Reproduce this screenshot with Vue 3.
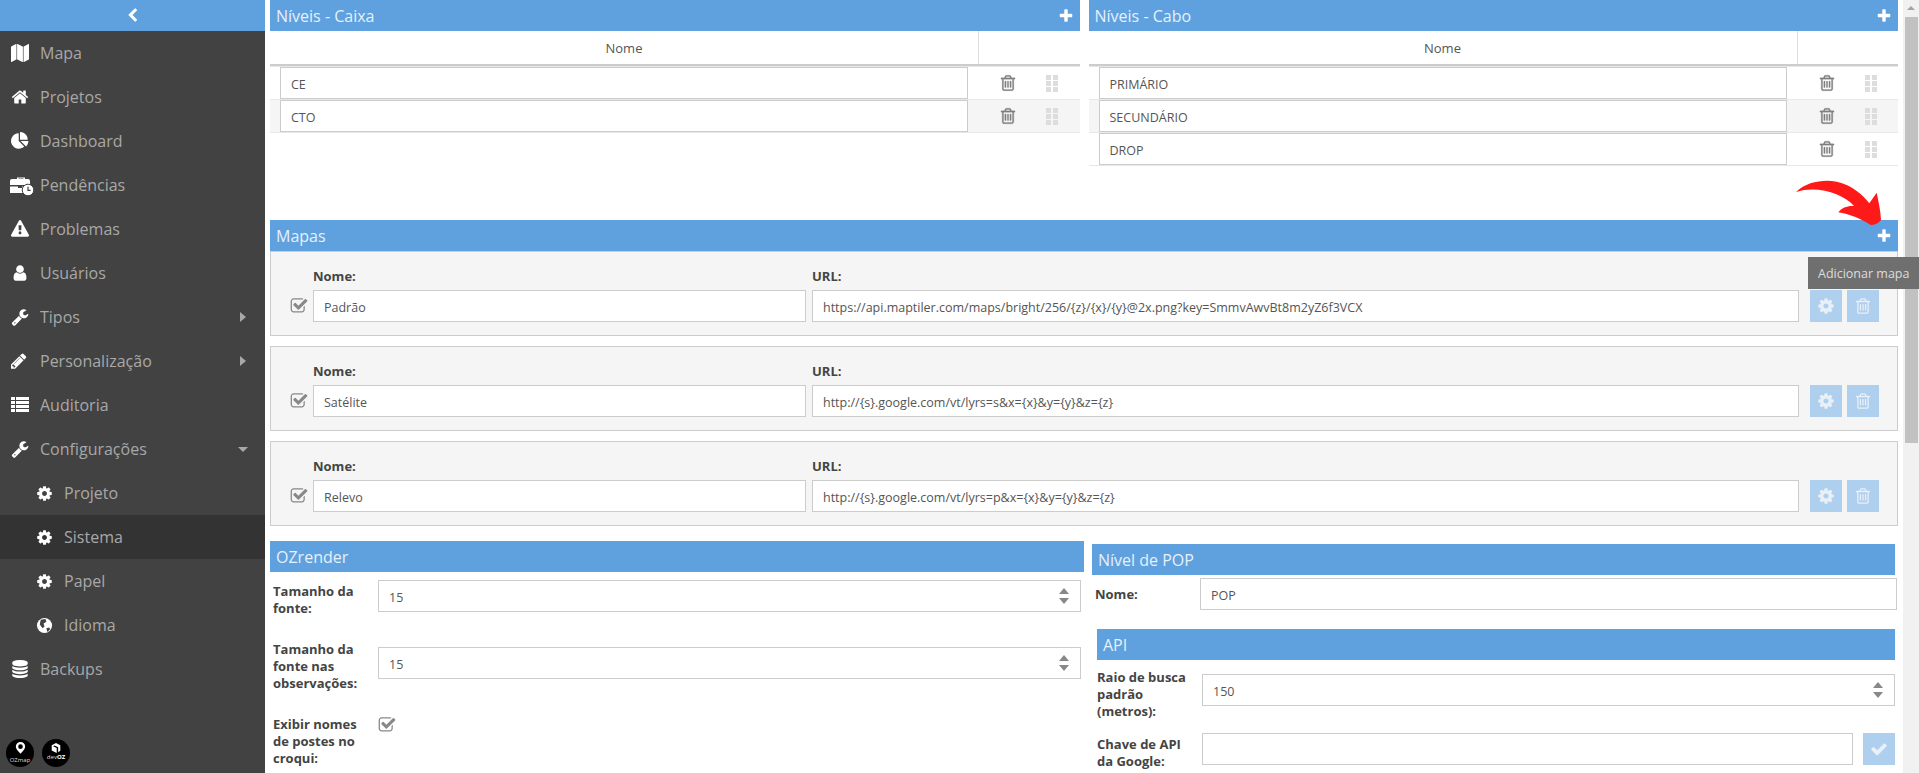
<template>
	<div class="page">
		<aside class="sidebar">
			<div class="side-top">
				<svg class="chevron" viewBox="0 0 1792 1792"><path :d="icons.chevron" /></svg>
			</div>
			<nav class="menu">
				<div
					v-for="item in menu"
					:key="item.label"
					class="menu-item"
					:class="{ sub: item.sub, active: item.active }"
				>
					<span class="menu-icon">
						<svg v-if="item.icon === 'briefcase'" class="case" viewBox="0 0 24 20">
							<path d="M7 3V1.500h8V3h3q2 0 2 2v4H0V5q0-2 2-2zM8.500 3h5V2.500h-5zM0 10.500h8v1.500h4v-1.500h8V17H0z" />
							<circle cx="18" cy="14" r="5.800" stroke="#424242" />
							<path d="M18 10.800V14.300h2.600" fill="none" stroke="#424242" stroke-width="1.200" />
						</svg>
						<svg v-else-if="item.icon === 'list'" viewBox="0 0 18 18">
							<path d="M0 1h4v3H0zM5 1h13v3H5zM0 5h4v3H0zM5 5h13v3H5zM0 9h4v3H0zM5 9h13v3H5zM0 13h4v3H0zM5 13h13v3H5z" />
						</svg>
						<svg v-else-if="item.icon === 'globe'" viewBox="0 0 18 18">
							<circle cx="9" cy="9" r="8" />
							<path d="M5 3l5-1 1 3-3 2 1 3-2 2-3-4zM11 12l3-1 1 2-3 3z" fill="#424242" />
						</svg>
						<svg v-else viewBox="0 0 1792 1792"><path :d="icons[item.icon]" /></svg>
					</span>
					<span class="menu-label">{{ item.label }}</span>
					<span v-if="item.caret" class="caret" :class="item.caret"></span>
				</div>
			</nav>
			<div class="side-logos">
				<div class="logo">
					<svg class="logo-pin" viewBox="0 0 14 18">
						<path d="M7 0a6 6 0 0 1 6 6q0 3-6 9Q1 9 1 6a6 6 0 0 1 6-6zm0 3a3 3 0 1 0 0 6 3 3 0 0 0 0-6z" fill="#fff" />
					</svg>
					<span class="logo-text">OZmap</span>
				</div>
				<div class="logo">
					<svg class="logo-box" viewBox="0 0 14 14">
						<path d="M1 3l6-3 6 3v8l-3 2V6L5 3.500 3 4.500 8 7v7L1 10.500z" fill="#fff" />
					</svg>
					<span class="logo-text">dev<b>OZ</b></span>
				</div>
			</div>
		</aside>

		<main class="content">
			<div class="two-cols levels">
				<section v-for="group in levels" :key="group.title">
					<header class="bar">
						<span>{{ group.title }}</span>
						<svg class="plus" viewBox="0 0 1792 1792"><path :d="icons.plus" /></svg>
					</header>
					<div class="table-head">
						<div class="th-name">Nome</div>
						<div class="th-actions"></div>
					</div>
					<div class="table-body">
						<div v-for="name in group.rows" :key="name" class="table-row">
							<div class="td-name"><input class="field" :value="name" /></div>
							<div class="td-actions">
								<svg class="trash" viewBox="0 0 1792 1792"><path :d="icons.trash" /></svg>
								<span class="grip"><i v-for="n in 6" :key="n"></i></span>
							</div>
						</div>
					</div>
				</section>
			</div>

			<section class="maps">
				<header class="bar">
					<span>Mapas</span>
					<svg class="plus" viewBox="0 0 1792 1792"><path :d="icons.plus" /></svg>
				</header>
				<div class="map-list">
					<div v-for="map in maps" :key="map.name" class="map-card">
						<svg class="check-box" viewBox="0 0 1792 1792"><path :d="icons.checkSquare" /></svg>
						<label class="map-name">
							<span class="label">Nome:</span>
							<input class="field" :value="map.name" />
						</label>
						<label class="map-url">
							<span class="label">URL:</span>
							<input class="field" :value="map.url" />
						</label>
						<button class="soft-btn"><svg viewBox="0 0 1792 1792"><path :d="icons.cog" /></svg></button>
						<button class="soft-btn"><svg viewBox="0 0 1792 1792"><path :d="icons.trash" /></svg></button>
					</div>
				</div>
			</section>

			<div class="two-cols bottom">
				<section>
					<header class="bar">OZrender</header>
					<div class="form render-form">
						<div class="form-row first">
							<span class="label">Tamanho da fonte:</span>
							<div class="spin-field">
								<input class="field" value="15" />
								<span class="spin"><i class="up"></i><i class="down"></i></span>
							</div>
						</div>
						<div class="form-row second">
							<span class="label">Tamanho da fonte nas observações:</span>
							<div class="spin-field">
								<input class="field" value="15" />
								<span class="spin"><i class="up"></i><i class="down"></i></span>
							</div>
						</div>
						<div class="form-row">
							<span class="label">Exibir nomes de postes no croqui:</span>
							<svg class="check-box" viewBox="0 0 1792 1792"><path :d="icons.checkSquare" /></svg>
						</div>
					</div>
				</section>

				<section class="right-col">
					<header class="bar">Nível de POP</header>
					<div class="pop-row">
						<span class="label">Nome:</span>
						<input class="field" value="POP" />
					</div>
					<div class="api">
						<header class="bar">API</header>
						<div class="api-row">
							<span class="label">Raio de busca padrão (metros):</span>
							<div class="spin-field">
								<input class="field" value="150" />
								<span class="spin"><i class="up"></i><i class="down"></i></span>
							</div>
						</div>
						<div class="api-row key">
							<span class="label">Chave de API da Google:</span>
							<input class="field" value="" />
							<button class="soft-btn"><svg viewBox="0 0 1792 1792"><path :d="icons.check" /></svg></button>
						</div>
					</div>
				</section>
			</div>
		</main>

		<div class="scrollbar">
			<span class="scroll-arrow"></span>
			<span class="scroll-thumb"></span>
		</div>

		<!-- seta e tooltip por cima do botao de adicionar -->
		<svg class="red-arrow" viewBox="0 0 417 270">
			<path d="M48 66C80 35 130 28 170 35 215 45 250 75 268 100L290 68C296 95 302 125 303 150 295 160 285 165 272 165 250 150 205 130 175 127 185 112 205 106 222 108 190 70 110 45 48 66Z" />
		</svg>
		<div class="tooltip">Adicionar mapa</div>
	</div>
</template>

<script setup>
const icons = {
	chevron: 'M1427 301l-531 531 531 531q19 19 19 45t-19 45l-166 166q-19 19-45 19t-45-19l-742-742q-19-19-19-45t19-45l742-742q19-19 45-19t45 19l166 166q19 19 19 45t-19 45z',
	plus: 'M1600 736v192q0 40-28 68t-68 28h-416v416q0 40-28 68t-68 28h-192q-40 0-68-28t-28-68v-416h-416q-40 0-68-28t-28-68v-192q0-40 28-68t68-28h416v-416q0-40 28-68t68-28h192q40 0 68 28t28 68v416h416q40 0 68 28t28 68z',
	trash: 'M704 736v576q0 14-9 23t-23 9h-64q-14 0-23-9t-9-23v-576q0-14 9-23t23-9h64q14 0 23 9t9 23zm256 0v576q0 14-9 23t-23 9h-64q-14 0-23-9t-9-23v-576q0-14 9-23t23-9h64q14 0 23 9t9 23zm256 0v576q0 14-9 23t-23 9h-64q-14 0-23-9t-9-23v-576q0-14 9-23t23-9h64q14 0 23 9t9 23zm128 724v-948h-896v948q0 22 7 40.500t14.500 27 10.500 8.500h832q3 0 10.500-8.500t14.500-27 7-40.500zm-672-1076h448l-48-117q-7-9-17-11h-317q-10 2-17 11zm928 32v64q0 14-9 23t-23 9h-96v948q0 83-47 143.500t-113 60.500h-832q-66 0-113-58.500t-47-141.500v-952h-96q-14 0-23-9t-9-23v-64q0-14 9-23t23-9h309l70-167q15-37 54-63t79-26h320q40 0 79 26t54 63l70 167h309q14 0 23 9t9 23z',
	check: 'M1671 566q0 40-28 68l-724 724-136 136q-28 28-68 28t-68-28l-136-136-362-362q-28-28-28-68t28-68l136-136q28-28 68-28t68 28l294 295 656-657q28-28 68-28t68 28l136 136q28 28 28 68z',
	cog: 'M1152 896q0-106-75-181t-181-75-181 75-75 181 75 181 181 75 181-75 75-181zm512-109v222q0 12-8 23t-20 13l-185 28q-19 54-39 91 35 50 107 138 10 12 10 25t-9 23q-27 37-99 108t-94 71q-12 0-26-9l-138-108q-44 23-91 38-16 136-29 186-7 28-36 28h-222q-14 0-24.500-8.500t-11.500-21.500l-28-184q-49-16-90-37l-141 107q-10 9-25 9-14 0-25-11-126-114-165-168-7-10-7-23 0-12 8-23 15-21 51-66.500t54-70.500q-27-50-41-99l-183-27q-13-2-21-12.500t-8-23.500v-222q0-12 8-23t19-13l186-28q14-46 39-92-40-57-107-138-10-12-10-24 0-10 9-23 26-36 98.500-107.500t94.500-71.500q13 0 26 10l138 107q44-23 91-38 16-136 29-186 7-28 36-28h222q14 0 24.500 8.500t11.500 21.500l28 184q49 16 90 37l142-107q9-9 24-9 13 0 25 10 129 119 165 170 7 8 7 22 0 12-8 23-15 21-51 66.500t-54 70.500q26 50 41 98l183 28q13 2 21 12.500t8 23.500z',
	checkSquare: 'M1472 930v318q0 119-84.500 203.500t-203.500 84.500h-832q-119 0-203.500-84.500t-84.500-203.500v-832q0-119 84.500-203.500t203.500-84.500h832q63 0 117 25 15 7 18 23 3 17-9 29l-49 49q-10 10-23 10-3 0-9-2-23-6-45-6h-832q-66 0-113 47t-47 113v832q0 66 47 113t113 47h832q66 0 113-47t47-113v-254q0-13 9-22l64-64q10-10 23-10 6 0 12 3 20 8 20 29zm231-489l-814 814q-24 24-57 24t-57-24l-430-430q-24-24-24-57t24-57l110-110q24-24 57-24t57 24l263 263 647-647q24-24 57-24t57 24l110 110q24 24 24 57t-24 57z',
	map: 'M512 0q13 0 22.500 9.500t9.500 22.500v1472q0 20-17 28l-480 256q-7 4-15 4-13 0-22.500-9.500t-9.500-22.500v-1472q0-20 17-28l480-256q7-4 15-4zm1248 0q13 0 22.500 9.500t9.500 22.500v1472q0 20-17 28l-480 256q-7 4-15 4-13 0-22.500-9.500t-9.500-22.500v-1472q0-20 17-28l480-256q7-4 15-4zm-1120 0q8 0 14 3l512 256q18 10 18 29v1472q0 13-9.500 22.500t-22.500 9.500q-8 0-14-3l-512-256q-18-10-18-29v-1472q0-13 9.500-22.500t22.500-9.500z',
	home: 'M1472 992v480q0 26-19 45t-45 19h-384v-384h-256v384h-384q-26 0-45-19t-19-45v-480q0-1 .5-3t.5-3l575-474 575 474q1 2 1 6zm223-69l-62 74q-8 9-21 11h-3q-13 0-21-7l-692-577-692 577q-12 8-24 7-13-2-21-11l-62-74q-8-10-7-23.500t11-21.500l719-599q32-26 76-26t76 26l244 204v-195q0-14 9-23t23-9h192q14 0 23 9t9 23v408l219 182q10 8 11 21.500t-7 23.500z',
	pie: 'M768 890l546 546q-106 108-247.500 168t-298.500 60q-209 0-385.500-103t-279.500-279.500-103-385.500 103-385.500 279.500-279.500 385.500-103v762zm187 6h773q0 157-60 298.500t-168 247.500zm709-128h-768v-768q209 0 385.500 103t279.500 279.500 103 385.500z',
	warning: 'M1024 1375v-190q0-14-9.500-23.500t-22.500-9.500h-192q-13 0-22.500 9.500t-9.500 23.500v190q0 14 9.500 23.500t22.500 9.500h192q13 0 22.500-9.500t9.500-23.500zm-2-374l18-459q0-12-10-19-13-11-24-11h-220q-11 0-24 11-10 7-10 21l17 457q0 10 10 16.500t24 6.500h185q14 0 23.500-6.500t10.500-16.500zm-14-934l768 1408q35 63-2 126-17 29-46.500 46t-63.500 17h-1536q-34 0-63.500-17t-46.500-46q-37-63-2-126l768-1408q17-31 47-49t65-18 65 18 47 49z',
	user: 'M1536 1399q0 109-62.500 187t-150.500 78h-854q-88 0-150.500-78t-62.500-187q0-85 8.500-160.500t31.500-152 58.500-131 94-89 134.500-34.500q131 128 313 128t313-128q76 0 134.500 34.500t94 89 58.500 131 31.500 152 8.500 160.500zm-256-887q0 159-112.500 271.500t-271.500 112.500-271.500-112.500-112.500-271.500 112.500-271.500 271.500-112.500 271.500 112.500 112.500 271.500z',
	wrench: 'M448 1472q0-26-19-45t-45-19-45 19-19 45 19 45 45 19 45-19 19-45zm644-420l-682 682q-37 37-90 37-52 0-91-37l-106-108q-38-36-38-90 0-53 38-91l681-681q39 98 114.500 173.500t173.500 114.500zm634-435q0 39-23 106-47 134-164.500 217.500t-258.500 83.500q-185 0-316.500-131.500t-131.500-316.500 131.500-316.500 316.500-131.500q58 0 121.500 16.500t107.500 46.500q16 11 16 28t-16 28l-293 169v224l193 107q5-3 79-48.500t135.500-81 70.500-35.500q15 0 23.500 10t8.500 25z',
	pencil: 'M363 1536l91-91-235-235-91 91v107h128v128h107zm523-928q0-22-22-22-10 0-17 7l-542 542q-7 7-7 17 0 22 22 22 10 0 17-7l542-542q7-7 7-17zm-54-192l416 416-832 832h-416v-416zm683 96q0 53-37 90l-166 166-416-416 166-165q36-38 90-38 53 0 91 38l235 234q37 39 37 91z',
	database: 'M896 768q237 0 443-43t325-127v170q0 69-103 128t-280 93.500-385 34.500-385-34.500-280-93.500-103-128v-170q119 84 325 127t443 43zm0 768q237 0 443-43t325-127v170q0 69-103 128t-280 93.500-385 34.500-385-34.500-280-93.500-103-128v-170q119 84 325 127t443 43zm0-384q237 0 443-43t325-127v170q0 69-103 128t-280 93.500-385 34.500-385-34.500-280-93.500-103-128v-170q119 84 325 127t443 43zm0-1152q208 0 385 34.500t280 93.500 103 128v128q0 69-103 128t-280 93.500-385 34.500-385-34.500-280-93.500-103-128v-128q0-69 103-128t280-93.500 385-34.500z',
}

const menu = [
	{ label: 'Mapa', icon: 'map' },
	{ label: 'Projetos', icon: 'home' },
	{ label: 'Dashboard', icon: 'pie' },
	{ label: 'Pendências', icon: 'briefcase' },
	{ label: 'Problemas', icon: 'warning' },
	{ label: 'Usuários', icon: 'user' },
	{ label: 'Tipos', icon: 'wrench', caret: 'right' },
	{ label: 'Personalização', icon: 'pencil', caret: 'right' },
	{ label: 'Auditoria', icon: 'list' },
	{ label: 'Configurações', icon: 'wrench', caret: 'down' },
	{ label: 'Projeto', icon: 'cog', sub: true },
	{ label: 'Sistema', icon: 'cog', sub: true, active: true },
	{ label: 'Papel', icon: 'cog', sub: true },
	{ label: 'Idioma', icon: 'globe', sub: true },
	{ label: 'Backups', icon: 'database' },
]

const levels = [
	{ title: 'Níveis - Caixa', rows: ['CE', 'CTO'] },
	{ title: 'Níveis - Cabo', rows: ['PRIMÁRIO', 'SECUNDÁRIO', 'DROP'] },
]

const maps = [
	{ name: 'Padrão', url: 'https://api.maptiler.com/maps/bright/256/{z}/{x}/{y}@2x.png?key=SmmvAwvBt8m2yZ6f3VCX' },
	{ name: 'Satélite', url: 'http://{s}.google.com/vt/lyrs=s&x={x}&y={y}&z={z}' },
	{ name: 'Relevo', url: 'http://{s}.google.com/vt/lyrs=p&x={x}&y={y}&z={z}' },
]
</script>

<style>
html, body { overflow: hidden; background: #fff; }
</style>

<style scoped>
.page {
	position: relative; display: flex; height: 100vh; overflow: hidden;
	font-family: "Open Sans", "Liberation Sans", sans-serif; color: #444; background: #fff;
}
svg { display: block; }

/* menu lateral */
.sidebar { width: 265px; flex-shrink: 0; display: flex; flex-direction: column; background: #424242; }
.side-top { height: 31px; background: #5fa1de; display: flex; align-items: center; justify-content: center; }
.chevron { width: 15px; height: 15px; fill: #fff; }
.menu-item { position: relative; display: flex; align-items: center; height: 44px; padding-left: 11px; color: #a8a8a8; font-size: 16px; }
.menu-item.sub { padding-left: 36px; }
.menu-item.active { background: #333; }
.menu-icon { width: 18px; height: 18px; margin-right: 11px; fill: #fff; flex-shrink: 0; }
.menu-item.sub .menu-icon { width: 17px; height: 17px; }
.menu-icon .case { width: 24px; height: 20px; margin-left: -1px; }
.caret { position: absolute; border-style: solid; border-color: transparent; }
.caret.right { right: 19px; top: 17px; border-width: 5px 0 5px 6px; border-left-color: #a8a8a8; }
.caret.down { right: 17px; top: 20px; border-width: 5px 5px 0; border-top-color: #a8a8a8; }
.side-logos { margin-top: auto; display: flex; gap: 8px; padding: 0 0 6px 6px; }
.logo { width: 28px; height: 28px; border-radius: 50%; background: #000; display: flex; flex-direction: column; align-items: center; color: #ddd; }
.logo-pin { width: 11px; height: 14px; margin-top: 3px; }
.logo-box { width: 10px; height: 10px; margin-top: 4px; }
.logo-text { font-size: 6px; line-height: 8px; white-space: nowrap; }
.logo-text b { color: #fff; }

/* conteudo */
.content { flex: 1; min-width: 0; padding: 0 5px; overflow: hidden; }
.two-cols { display: grid; }
.levels { grid-template-columns: 1fr 1fr; column-gap: 9px; margin-bottom: 54px; }
.bar {
	display: flex; align-items: center; justify-content: space-between;
	height: 31px; padding: 0 6px; background: #5fa1de; color: #e6f0fa; font-size: 16px;
}
.plus { width: 16px; height: 16px; fill: #fff; }

.table-head { display: flex; height: 35px; box-sizing: border-box; border-bottom: 2px solid #ccc; font-size: 13px; color: #555; }
.th-name { width: 709px; box-sizing: border-box; display: flex; align-items: center; justify-content: center; border-right: 1px solid #ddd; }
.th-actions { flex: 1; }
.table-row { display: flex; height: 33px; box-sizing: border-box; border-top: 1px solid #e8e8e8; }
.table-row:nth-child(even) { background: #f5f5f5; }
.table-row:last-child { height: 34px; border-bottom: 1px solid #e8e8e8; }
.td-name { width: 709px; box-sizing: border-box; padding: 0 11px 0 10px; }
.td-actions { flex: 1; display: flex; align-items: center; padding-left: 20px; gap: 29px; }
.trash { width: 18px; height: 18px; fill: #808080; stroke: #808080; stroke-width: 30; }
.grip { display: grid; grid-template-columns: 5px 5px; grid-auto-rows: 5px; gap: 1px 2px; }
.grip i { background: #ddd; }

.field {
	display: block; width: 100%; height: 32px; box-sizing: border-box; padding: 2px 10px 0;
	border: 1px solid #ccc; background: #fff; outline: none; color: #555;
	font: 12.5px "Open Sans", "Liberation Sans", sans-serif; border-radius: 0;
}
.label { font-size: 13px; line-height: 17px; font-weight: 700; color: #444; }

.map-list { display: flex; flex-direction: column; gap: 10px; }
.map-card {
	display: flex; align-items: flex-end; height: 85px; box-sizing: border-box;
	padding: 0 18px 13px 19px; border: 1px solid #ccc; background: #f5f5f5;
}
.check-box { width: 18px; height: 18px; fill: #888; }
.map-card .check-box { margin: 0 5px 7px 0; }
.map-name { width: 493px; margin-right: 6px; }
.map-url { flex: 1; margin-right: 11px; }
.map-name .label, .map-url .label { display: block; margin-bottom: 5px; }
.soft-btn {
	width: 32px; height: 32px; padding: 0; border: none; background: #aecfee; flex-shrink: 0;
	display: flex; align-items: center; justify-content: center; fill: #e9f0f7;
}
.soft-btn + .soft-btn { margin-left: 5px; }
.soft-btn svg { width: 18px; height: 18px; }

.bottom { grid-template-columns: 814px 1fr; column-gap: 8px; margin-top: 15px; }
.render-form { padding: 8px 3px 0; }
.form-row { display: grid; grid-template-columns: 105px 1fr; align-items: start; margin-bottom: 24px; }
.form-row .label { padding-right: 12px; }
.form-row.first .label { margin-top: 3px; }
.form-row.second .spin-field { margin-top: 6px; }
.spin-field { position: relative; }
.spin { position: absolute; right: 12px; top: 8px; display: flex; flex-direction: column; gap: 4px; }
.spin i { width: 0; height: 0; border-style: solid; border-color: transparent; }
.spin .up { border-width: 0 5px 6px; border-bottom-color: #888; }
.spin .down { border-width: 6px 5px 0; border-top-color: #888; }

.right-col { margin-top: 3px; margin-right: 3px; }
.pop-row { display: grid; grid-template-columns: 105px 1fr; align-items: center; padding-left: 3px; margin: 3px -2px 19px 0; }
.api { margin-left: 5px; }
.api-row { display: grid; grid-template-columns: 105px 1fr; align-items: start; margin-top: 14px; }
.api-row .label { padding-right: 10px; margin-top: -5px; }
.api-row.key { grid-template-columns: 95px 1fr 32px; column-gap: 10px; margin-top: 13px; }
.api-row.key .label { padding-right: 0; margin-top: 3px; }

.scrollbar { width: 16px; flex-shrink: 0; background: #f1f1f1; position: relative; }
.scroll-arrow { display: block; width: 0; height: 0; margin: 6px auto 0; border: 4px solid transparent; border-top: 0; border-bottom: 4px solid #a3a3a3; }
.scroll-thumb { display: block; width: 13px; height: 426px; margin: 7px 0 0 2px; background: #c1c1c1; }

.red-arrow { position: absolute; left: 1780px; top: 170px; width: 139px; height: 90px; fill: #ff1a1a; }
.tooltip {
	position: absolute; left: 1808px; top: 257px; width: 111px; height: 32px; box-sizing: border-box;
	padding-left: 10px; display: flex; align-items: center; background: #6f6f6f;
	color: #ddd; font-size: 12.5px; white-space: nowrap;
}
</style>
